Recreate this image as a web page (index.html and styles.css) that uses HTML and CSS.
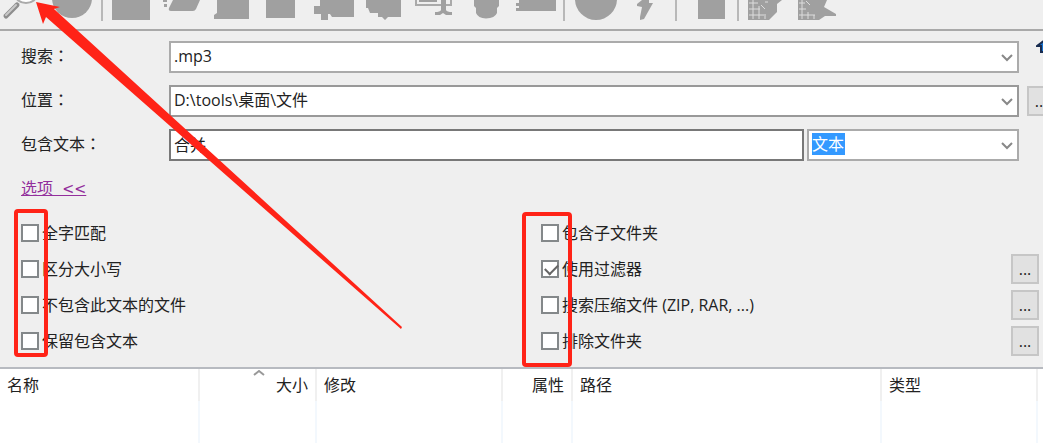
FILE: index.html
```
<!DOCTYPE html>
<html lang="zh-CN">
<head>
    <meta charset="UTF-8">
    <title>搜索</title>
    <link rel="stylesheet" href="styles.css">
</head>
<body>
<div class="toolbar">
    <button type="button" aria-label="搜索">
        <svg viewBox="0 0 50 28"><path d="M10 16L21 5" stroke="#8e8e8e" stroke-width="5" stroke-linecap="round"/><path d="M10 15L20 5" stroke="#c9c9c9" stroke-width="2" stroke-linecap="round"/><ellipse cx="30" cy="-6" rx="11" ry="9" fill="#fff" stroke="#aaa" stroke-width="2"/></svg>
    </button>
    <button type="button" aria-label="停止">
        <svg viewBox="0 0 50 28"><circle cx="26" cy="-2" r="20"/></svg>
    </button>
    <span class="separator"></span>
    <button type="button" aria-label="查看">
        <svg viewBox="0 0 50 28"><path d="M4 0h38v20H4z"/></svg>
    </button>
    <button type="button" aria-label="打开">
        <svg viewBox="0 0 50 28"><path d="M15 0H42L38 9Q37 11 35 11H13Q10 11 11 8zM5 0h4v2H5zM6 4h3v3H6z"/></svg>
    </button>
    <button type="button" aria-label="复制">
        <svg viewBox="0 0 50 28"><path d="M9 0H41V19H6V15L9 13z"/></svg>
    </button>
    <button type="button" aria-label="移动">
        <svg viewBox="0 0 50 28"><path d="M8 0h29v18H8z"/></svg>
    </button>
    <button type="button" aria-label="压缩">
        <svg viewBox="0 0 50 28"><path d="M12 0H46V17H24L22 14H20V20H13V14H6V6H12z"/></svg>
    </button>
    <button type="button" aria-label="解压">
        <svg viewBox="0 0 50 28"><path d="M8 0H43V17H30L27 20L24 17H20V13H12L10 8H8z"/></svg>
    </button>
    <button type="button" aria-label="重命名">
        <svg viewBox="0 0 50 28"><path d="M8 0V5H43V0" fill="none" stroke="#aaa" stroke-width="2"/><path d="M11 0H29V2H11zM33 0H38V10Q39 12 44 12V15H38L35 13L32 15H27V12Q32 12 33 10z"/></svg>
    </button>
    <button type="button" aria-label="删除">
        <svg viewBox="0 0 50 28"><path d="M16 0H41V6L39 8V13Q37 18 28 18.500Q20 18 18 13V8L16 6z"/></svg>
    </button>
    <button type="button" aria-label="属性">
        <svg viewBox="0 0 50 28"><path d="M11 0H48V11H8V8H11V6H8V3H11z"/></svg>
    </button>
    <span class="separator"></span>
    <button type="button" aria-label="刷新">
        <svg viewBox="0 0 50 28"><circle cx="26" cy="-1" r="21"/></svg>
    </button>
    <button type="button" aria-label="快速">
        <svg viewBox="0 0 50 28"><path d="M22 0H29V3H33L24 19L20 20V17L22 7L17 6V4z"/></svg>
    </button>
    <span class="separator"></span>
    <button type="button" aria-label="保存">
        <svg viewBox="0 0 50 28"><path d="M16 0h27v19H16z"/></svg>
    </button>
    <span class="separator"></span>
    <button type="button" aria-label="全选">
        <svg viewBox="0 0 50 28"><path d="M4 0H38L33 4V12L25 20H4z"/><path d="M5 3H14M5 9H16M5 15H20M9 0V19M15 6V19M21 14V19M21 2H24M17 5L21 9" stroke="#ddd" fill="none"/></svg>
    </button>
    <button type="button" aria-label="取消选择">
        <svg viewBox="0 0 50 28"><path d="M4 0H33L30 7L42 14V16H31L25 20H4z"/><path d="M5 3H11M5 9H12M5 15H21M8 0V19M14 12V19M20 15V19M12 1L16 5" stroke="#ddd" fill="none"/></svg>
    </button>
</div>

<form class="search-form">
    <div class="field">
        <label for="pattern">搜索：</label>
        <div class="combo">
            <select id="pattern"><option>.mp3</option></select>
            <svg class="chevron" viewBox="0 0 12 8"><path d="M1 1L6 6L11 1"/></svg>
        </div>
        <div class="side">
            <button type="button" class="up" aria-label="向上">
                <svg viewBox="0 0 18 14"><path d="M9 1L17 7H13V13H5V7H1z" fill="#1673d1" stroke="#182c50" stroke-width="2"/></svg>
            </button>
        </div>
    </div>
    <div class="field location">
        <label for="location">位置：</label>
        <div class="combo">
            <select id="location"><option>D:\tools\桌面\文件</option></select>
            <svg class="chevron" viewBox="0 0 12 8"><path d="M1 1L6 6L11 1"/></svg>
        </div>
        <div class="side"><button type="button" class="browse">...</button></div>
    </div>
    <div class="field">
        <label for="contains">包含文本：</label>
        <input type="text" id="contains" value="合并">
        <div class="combo type">
            <select id="textType" aria-label="文本类型"><option>文本</option></select>
            <svg class="chevron" viewBox="0 0 12 8"><path d="M1 1L6 6L11 1"/></svg>
        </div>
        <div class="side"></div>
    </div>

    <a href="#options" class="toggle">选项&nbsp; &lt;&lt;</a>

    <div class="options" id="options">
        <div class="option"><label><input type="checkbox">全字匹配</label></div>
        <div class="option"><label><input type="checkbox">包含子文件夹</label></div>
        <div class="option"><label><input type="checkbox">区分大小写</label></div>
        <div class="option"><label><input type="checkbox" checked>使用过滤器</label><button type="button" class="browse">...</button></div>
        <div class="option"><label><input type="checkbox">不包含此文本的文件</label></div>
        <div class="option"><label><input type="checkbox">搜索压缩文件 (ZIP, RAR, ...)</label><button type="button" class="browse">...</button></div>
        <div class="option"><label><input type="checkbox">保留包含文本</label></div>
        <div class="option"><label><input type="checkbox">排除文件夹</label><button type="button" class="browse">...</button></div>
    </div>
</form>

<table class="results">
    <colgroup>
        <col class="name"><col class="size"><col class="modified"><col class="attr"><col class="path"><col class="kind"><col>
    </colgroup>
    <thead>
        <tr>
            <th>名称</th>
            <th class="right sorted">大小<svg class="sort" viewBox="0 0 12 6"><path d="M1 5L6 1L11 5"/></svg></th>
            <th>修改</th>
            <th class="right">属性</th>
            <th>路径</th>
            <th>类型</th>
            <th></th>
        </tr>
    </thead>
    <tbody>
        <tr><td></td><td></td><td></td><td></td><td></td><td></td><td></td></tr>
    </tbody>
</table>

<!-- red marks over the window -->
<div class="mark mark-left"></div>
<div class="mark mark-right"></div>
<svg class="arrow" viewBox="0 0 410 340"><path d="M36 2L60 7L54 9L402 327L401 329L46 17L43 24z"/></svg>
</body>
</html>
```
FILE: styles.css
```
* {
    box-sizing: border-box;
}
body {
    position: relative;
    height: 100vh;
    margin: 0;
    overflow: hidden;
    background-color: #efefef;
    color: #222;
    font-family: "Open Sans", "Noto Sans CJK SC", sans-serif;
    font-size: 16px;
    line-height: 24px;
}
button,
input,
select {
    margin: 0;
    padding: 0;
    font: inherit;
    color: inherit;
}

/* toolbar */
.toolbar {
    display: flex;
    height: 31px;
    margin-left: -4px;
    border-bottom: 2px solid #a9a9a9;
}
.toolbar button {
    flex: none;
    width: 50px;
    height: 28px;
    border: none;
    background: none;
}
.toolbar svg {
    display: block;
    width: 50px;
    height: 28px;
    fill: #a0a0a0;
}
.separator {
    flex: none;
    width: 2px;
    height: 21px;
    margin: 0 5px;
    background-color: #b8b8b8;
}

/* search form */
.search-form {
    padding: 10px 0 8px 21px;
    border-bottom: 2px solid #b7bac0;
}
.field {
    display: flex;
    align-items: center;
    height: 32px;
    margin-bottom: 12px;
}
.field label {
    flex: none;
    width: 148px;
    padding-bottom: 4px;
    font-family: "Noto Sans CJK TC", sans-serif;
}
/* TC font only for its centred colon */
.field label:lang(zh) {
    -webkit-locale: "zh-TW";
}
.combo {
    position: relative;
    flex: 1;
    height: 32px;
}
.combo select,
.field input {
    width: 100%;
    height: 32px;
    padding: 0 0 2px 3px;
    border: 2px solid #ababab;
    border-radius: 0;
    outline: none;
    background-color: white;
    appearance: none;
}
.location select {
    border-color: #999;
}
.field input {
    flex: 1;
    min-width: 0;
    border-color: #787878;
}
.combo.type {
    flex: none;
    width: 212px;
    margin-left: 3px;
}
.type select {
    color: white;
    background: linear-gradient(#3399ff, #3399ff) 3px 2px / 33px 22px no-repeat white;
}
.chevron {
    position: absolute;
    top: 13px;
    right: 6px;
    width: 12px;
    height: 8px;
    fill: none;
    stroke: #888;
    stroke-width: 2;
    pointer-events: none;
}
.side {
    flex: none;
    width: 24px;
    padding-left: 8px;
}
.browse {
    display: block;
    width: 28px;
    height: 30px;
    border: 2px solid #c6c6c6;
    background-color: #e1e1e1;
}
.up {
    display: block;
    width: 18px;
    height: 14px;
    margin: 0 0 22px 9px;
    border: none;
    background: none;
}
.up svg {
    display: block;
    width: 18px;
    height: 14px;
}
.toggle {
    display: inline-block;
    margin: 4px 0 14px;
    color: #932f9c;
    font-family: "DejaVu Sans Condensed", "Open Sans", "Noto Sans CJK SC", sans-serif;
}

/* options */
.options {
    display: grid;
    grid-template-columns: 520px 1fr;
    grid-auto-rows: 36px;
    padding-right: 4px;
}
.option {
    display: flex;
    align-items: center;
    justify-content: space-between;
}
.option label {
    display: flex;
    align-items: center;
    gap: 3px;
}
.option input {
    width: 18px;
    height: 18px;
    border: 2px solid #84888a;
    background-color: white;
    appearance: none;
}
.option input:checked::before {
    content: "";
    display: block;
    width: 11px;
    height: 6px;
    margin: 2px 0 0 2px;
    border: solid #666;
    border-width: 0 0 2px 2px;
    transform: rotate(-45deg);
}

/* result list */
.results {
    width: 100%;
    table-layout: fixed;
    border-collapse: collapse;
    background-color: white;
}
.name { width: 199px; }
.size { width: 117px; }
.modified { width: 186px; }
.attr { width: 70px; }
.path { width: 309px; }
.kind { width: 156px; }
.results th {
    height: 32px;
    padding: 0 7px;
    border-right: 2px solid #f0f0f0;
    font-weight: normal;
    text-align: left;
}
.results .right {
    text-align: right;
}
.results td {
    height: calc(100vh - 401px);
    padding: 0;
    border-right: 2px solid #f3f8fd;
}
.results th:last-child,
.results td:last-child {
    padding: 0;
    border-right: none;
}
.sorted {
    position: relative;
}
.sort {
    position: absolute;
    top: 1px;
    left: 53px;
    width: 12px;
    height: 6px;
    fill: none;
    stroke: #999;
    stroke-width: 2;
}

/* marks */
.mark {
    position: absolute;
    border: 4px solid #ff2317;
    border-radius: 4px;
}
.mark-left {
    top: 209px;
    left: 14px;
    width: 34px;
    height: 148px;
}
.mark-right {
    top: 212px;
    left: 522px;
    width: 50px;
    height: 155px;
}
.arrow {
    position: absolute;
    top: 0;
    left: 0;
    width: 410px;
    height: 340px;
    fill: #ff2317;
    pointer-events: none;
}
```
